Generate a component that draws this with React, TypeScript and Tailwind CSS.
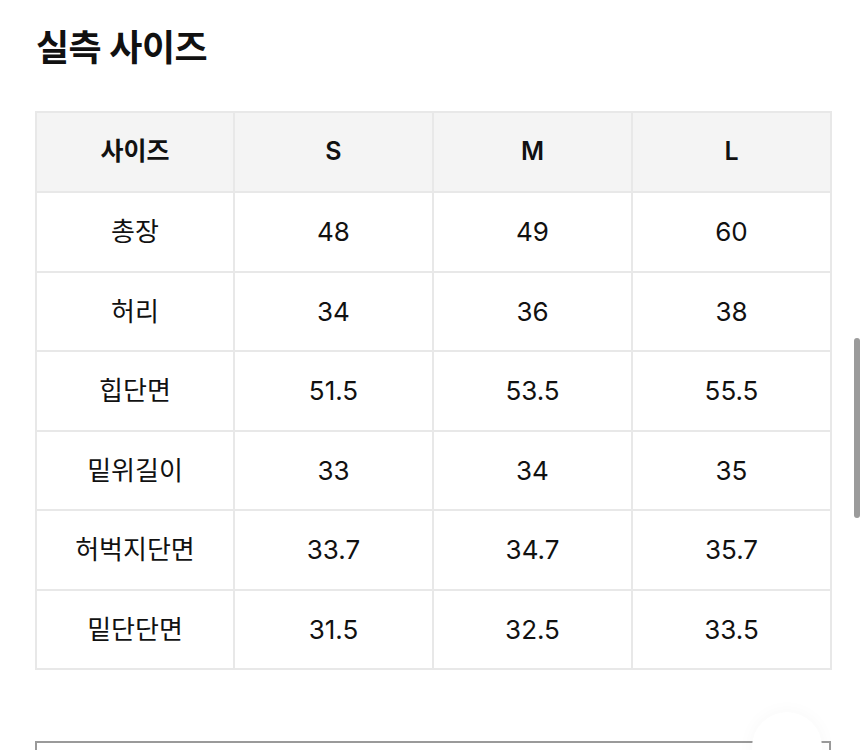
const header = ["사이즈", "S", "M", "L"];

const rows = [
  ["총장", "48", "49", "60"],
  ["허리", "34", "36", "38"],
  ["힙단면", "51.5", "53.5", "55.5"],
  ["밑위길이", "33", "34", "35"],
  ["허벅지단면", "33.7", "34.7", "35.7"],
  ["밑단단면", "31.5", "32.5", "33.5"],
];

export default function App() {
  return (
    <div
      className="relative h-[750px] w-[868px] overflow-hidden bg-white text-[#111]"
      style={{ fontFamily: 'Inter, "Noto Sans CJK KR", sans-serif' }}
    >
      <div className="pl-[35px] pr-[37px] pt-[24px]">
        <h1 className="pl-[1px] text-[36px] font-bold leading-[48px] tracking-[-0.5px]">실측 사이즈</h1>

        <table className="mt-[39px] w-[797px] table-fixed border-collapse">
          <colgroup>
            <col className="w-[198px]" />
            <col className="w-[199px]" />
            <col className="w-[199px]" />
            <col className="w-[199px]" />
          </colgroup>
          <thead>
            <tr className="h-[80px] bg-[#f4f4f4]">
              {header.map((h) => (
                <th key={h} className="border-2 border-[#e8e8e8] text-[25px] font-semibold">
                  {h}
                </th>
              ))}
            </tr>
          </thead>
          <tbody>
            {rows.map((row) => (
              <tr key={row[0]} className="h-[79.5px]">
                {row.map((cell, i) => (
                  <td key={i} className="border-2 border-[#e8e8e8] text-center text-[26px] font-normal">
                    {cell}
                  </td>
                ))}
              </tr>
            ))}
          </tbody>
        </table>

        <div className="mt-[71px] h-[40px] border-2 border-[#9a9a9a] bg-white" />
      </div>

      {/* scroll indicator */}
      <div className="absolute left-[854px] top-[338px] h-[180px] w-[6px] rounded-full bg-[#9b9b9b]" />
      {/* floating button shadow */}
      <div className="absolute left-[752px] top-[712px] h-[70px] w-[70px] rounded-full bg-white shadow-[0_0_18px_rgba(0,0,0,0.035)]" />
    </div>
  );
}
